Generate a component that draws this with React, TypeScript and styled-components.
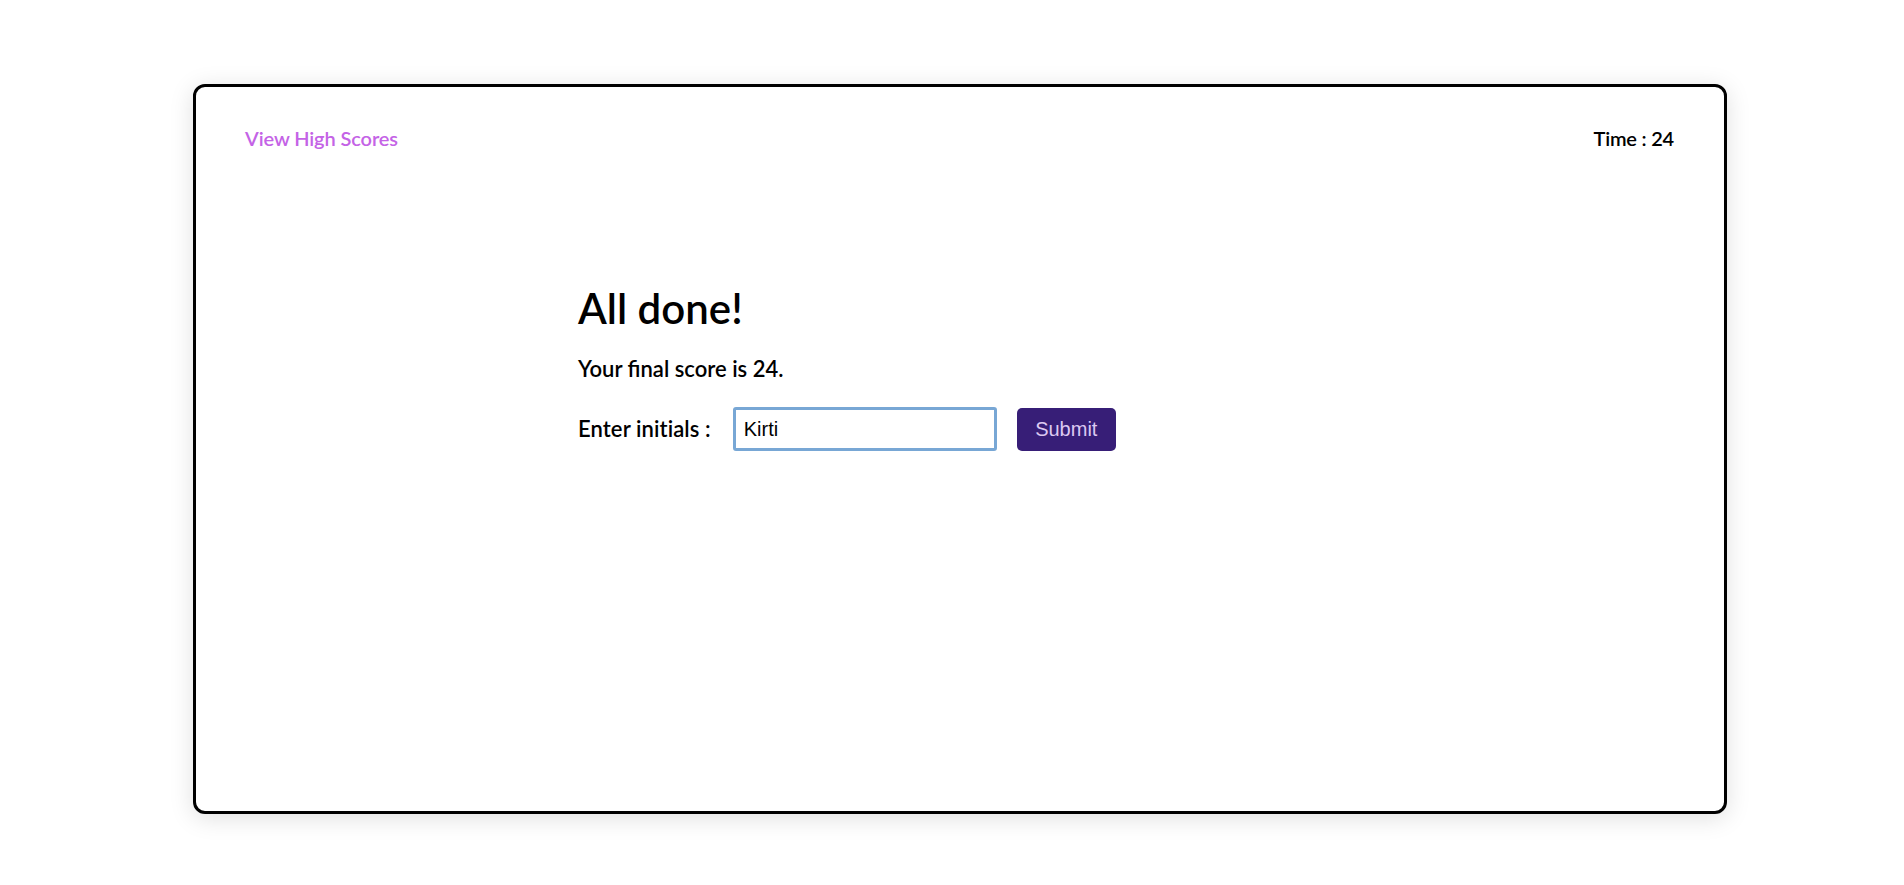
import React, {useState} from 'react';
import styled, {createGlobalStyle} from 'styled-components';

const GlobalStyle = createGlobalStyle`
  html, body {
    margin: 0;
    padding: 0;
    background: #ffffff;
    font-family: Lato, "Open Sans", sans-serif;
    color: #000000;
  }
`;

const Page = styled.div`
  padding: 84px 0 0 193px;
  min-height: 885px;
  box-sizing: border-box;
`;

const Card = styled.main`
  width: 1534px;
  height: 730px;
  box-sizing: border-box;
  border: 3px solid #000;
  border-radius: 12px;
  background: #fff;
  box-shadow: 0 4px 24px rgba(0, 0, 0, 0.13);
  display: flex;
  flex-direction: column;
`;

const Header = styled.header`
  display: flex;
  justify-content: space-between;
  align-items: center;
  padding: 39px 50px 0 49px;
  font-size: 20px;
  line-height: 24px;
`;

const ScoresLink = styled.a`
  color: #c463e6;
  font-weight: 600;
  letter-spacing: -0.1px;
  text-decoration: none;
  cursor: pointer;
`;

const Timer = styled.span`
  font-weight: 600;
  letter-spacing: -0.2px;
`;

const Content = styled.section`
  width: 50%;
  margin: 133px auto 0;
`;

const Title = styled.h1`
  margin: 0;
  font-size: 42px;
  line-height: 50px;
  font-weight: 600;
`;

const Score = styled.p`
  margin: 23px 0 0;
  font-size: 22px;
  line-height: 26px;
  font-weight: 600;
`;

const Form = styled.form`
  display: flex;
  align-items: center;
  margin-top: 25px;
`;

const Label = styled.label`
  font-size: 22px;
  line-height: 26px;
  font-weight: 600;
  letter-spacing: 0.1px;
  margin-right: 22px;
`;

const Input = styled.input`
  width: 264px;
  height: 44px;
  box-sizing: border-box;
  border: 3px solid #78a7d5;
  border-radius: 3px;
  padding: 0 8px;
  font-family: "Liberation Sans", Arial, sans-serif;
  font-size: 20px;
  color: #000;
  outline: none;
`;

const SubmitButton = styled.button`
  margin-left: 20px;
  width: 99px;
  height: 43px;
  border: none;
  border-radius: 5px;
  background: #371e77;
  color: #dcc9f1;
  font-family: "Liberation Sans", Arial, sans-serif;
  font-size: 20px;
  cursor: pointer;
`;

function App() {
  const [initials, setInitials] = useState('Kirti');
  const score = 24;

  return (
    <>
      <GlobalStyle />
      <Page>
        <Card>
          <Header>
            <ScoresLink>View High Scores</ScoresLink>
            <Timer>Time : {score}</Timer>
          </Header>
          <Content>
            <Title>All done!</Title>
            <Score>Your final score is {score}.</Score>
            <Form onSubmit={e => e.preventDefault()}>
              <Label htmlFor="initials">Enter initials :</Label>
              <Input id="initials" value={initials} onChange={e => setInitials(e.target.value)} />
              <SubmitButton type="submit">Submit</SubmitButton>
            </Form>
          </Content>
        </Card>
      </Page>
    </>
  );
}

export default App;
